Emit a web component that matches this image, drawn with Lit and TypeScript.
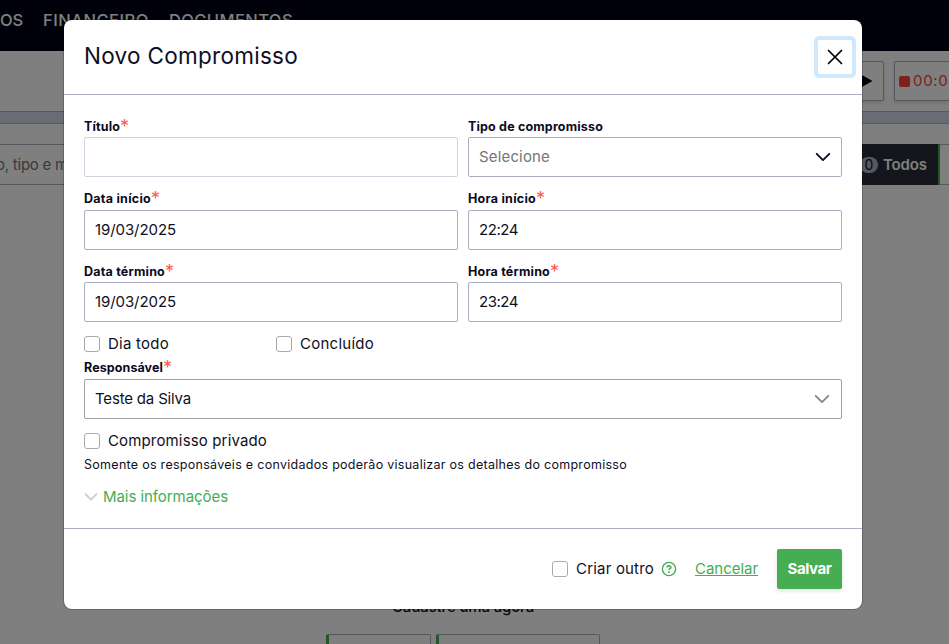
import { LitElement, html, css, svg, nothing } from "lit";
import { customElement, property } from "lit/decorators.js";

/** Text run tracked so that it fills a given advance width. */
@customElement("tracked-text")
class TrackedText extends LitElement {
  @property() text = "";
  @property({ type: Number }) width = 0;
  static styles = css`
    :host { display: inline-block; white-space: pre; flex: none; }
  `;
  render() {
    return html`<span>${this.text}</span>`;
  }
  updated() {
    const span = this.renderRoot.querySelector("span")!;
    span.style.letterSpacing = "0";
    const natural = span.getBoundingClientRect().width;
    span.style.letterSpacing = `${(this.width - natural) / this.text.length}px`;
  }
}

const t = (text: string, width: number) =>
  html`<tracked-text .text=${text} .width=${width}></tracked-text>`;

const chevron = (cls: string) => html`
  <svg class="chevron ${cls}" viewBox="0 0 16 16">
    ${svg`<path d="M1.7 4.8 8 11.1l6.3-6.3" fill="none" stroke="currentColor" stroke-linecap="round" stroke-linejoin="round"/>`}
  </svg>`;

@customElement("app-root")
class AppRoot extends LitElement {
  static styles = css`
    :host {
      display: block; position: relative; width: 949px; height: 644px; overflow: hidden;
      background: #fff; color: #0f0f23; font: 15px/20px Inter, "Open Sans", sans-serif;
    }
    * { box-sizing: border-box; }
    .page { display: flex; flex-direction: column; height: 644px; }
    .nav { height: 51px; flex: none; background: #000014; color: #fff; font-size: 16.5px; font-weight: 500;
      display: flex; align-items: flex-start; gap: 20px; padding-top: 10px; }
    .timer { height: 61px; flex: none; border-bottom: 1px solid #abaec2; display: flex; justify-content: flex-end;
      gap: 10px; padding-top: 10px; box-shadow: 0 2px 4px rgba(0,0,0,.1); }
    .box { height: 40px; border: 1px solid #abaec2; border-radius: 2px; display: flex; align-items: center;
      box-shadow: 0 2px 4px rgba(0,0,0,.12); }
    .play { width: 60px; justify-content: flex-end; padding-right: 10px; }
    .play svg { width: 12px; height: 14px; }
    .clock { width: 55px; border-right: 0; border-radius: 2px 0 0 2px; color: #ff4439; padding-left: 4px; gap: 3px; }
    .stop { width: 11px; height: 11px; border-radius: 2px; background: #ff4439; flex: none; }
    .band { height: 12px; flex: none; background: #d3d8e8; border-bottom: 1px solid #abaec2; }
    .filters { height: 61px; padding-top: 20px; flex: none; display: flex; }
    .search { flex: 1; height: 41px; border: 1px solid #abaec2; border-width: 1px 0; display: flex; align-items: center; color: #757575; }
    .search tracked-text { margin-left: -4px; }
    .all { height: 41px; width: 100px; background: #2b2d38; border-right: 2px solid #46ad53; color: #fff; font-weight: 600;
      display: flex; align-items: center; justify-content: flex-end; gap: 5px; padding-right: 11px; }
    .count { background: #abaec2; color: #0f0f23; border-radius: 8px; height: 16px; width: 18px; font-size: 14px; font-weight: 400;
      display: flex; align-items: center; justify-content: center; }
    .next { width: 9px; height: 41px; border: 1px solid #abaec2; border-width: 1px 0; }
    .empty { flex: 1; display: flex; flex-direction: column; justify-content: flex-end; }
    .hint { padding-left: 392px; height: 37px; font-weight: 450; }
    .choices { display: flex; gap: 5px; padding-left: 326px; }
    .choice { height: 10px; border: 1px solid #abaec2; border-left: 3px solid #46ad53; border-bottom: 0; border-radius: 2px 2px 0 0; }
    .c1 { width: 105px; } .c2 { width: 164px; }
    .backdrop { position: absolute; inset: 0; background: rgba(0,0,0,.5); display: flex; justify-content: center; align-items: flex-start;
      padding: 20px 23px 0 0; }
    .modal { width: 798px; height: 589px; background: #fff; border-radius: 8px; box-shadow: 0 0 0 1px rgba(0,0,0,.2); display: flex; flex-direction: column; }
    header { height: 75px; flex: none; border-bottom: 1px solid #abaec2; padding: 18px 10px 0 20px; display: flex; justify-content: space-between; align-items: flex-start; }
    h1 { margin: 0; font-size: 22.5px; line-height: 36px; font-weight: 400; }
    .close { width: 34px; height: 34px; border: 0; border-radius: 2px; box-shadow: 0 0 0 4px #cfe8fc; background: #fff; padding: 0; color: #000;
      margin: 2px 0 0; display: flex; align-items: center; justify-content: center; }
    .close svg { width: 16px; height: 16px; display: block; }
    .body { height: 433px; flex: none; padding: 23px 20px 0; }
    .row { display: grid; grid-template-columns: 374px 374px; gap: 10px; }
    .label { height: 19px; font-size: 12.5px; line-height: 17px; font-weight: 700; display: flex; color: #0a0a1e; }
    .star { color: #ff5a4f; font-weight: 400; font-size: 18px; line-height: 18px; }
    .input { height: 40px; border: 1px solid #abaec2; border-radius: 2px; display: flex; align-items: center; justify-content: space-between; padding: 0 10px; }
    .field { margin-bottom: 13px; }
    .second .label { height: 20px; }
    .last .field { margin-bottom: 12px; }
    .light { border-color: #cdd2de; } .grey { border-color: #a0a0a0; }
    .placeholder { color: #757575; }
    .chevron { width: 16px; height: 16px; flex: none; stroke-width: 1.9; }
    .dim { color: #858585; stroke-width: 1.8; margin-right: 1px; }
    .pale { width: 14px; height: 14px; color: #ccc; stroke-width: 2.1; }
    .checks { display: grid; grid-template-columns: 192px 1fr; height: 25px; }
    .owner .label { height: 20px; }
    .check { display: flex; align-items: center; gap: 8px; height: 20px; }
    .check i { width: 16px; height: 16px; border: 1px solid #aaa; border-radius: 3px; background: #fff; }
    .privacy { margin-top: 12px; }
    .note { font-size: 12.5px; line-height: 18px; margin-top: 5px; height: 31px; }
    .more { display: flex; align-items: center; gap: 5px; color: #46ad53; height: 20px; }
    footer { height: 81px; border-top: 1px solid #abaec2; display: flex; justify-content: flex-end; align-items: center; padding-right: 20px; }
    .help { width: 16px; height: 16px; margin: 0 18px 0 7px; color: #46ad53; }
    .cancel { color: #46ad53; height: 18px; line-height: 20px; border-bottom: 1px solid #46ad53; margin: 0 19px 0 0; position: relative; top: -2px; display: flex; }
    .cancel tracked-text { position: relative; top: 1px; }
    .save { width: 65px; height: 40px; border: 0; border-radius: 2px; background: #46ad53; color: #fff; font: inherit; font-weight: 700; padding: 0;
      box-shadow: 0 2px 4px rgba(0,0,0,.12); }
  `;

  private label(text: string, width: number, required = true) {
    return html`<div class="label">${t(text, width)}${required ? html`<span class="star">*</span>` : nothing}</div>`;
  }

  private field(label: string, lw: number, value: string, vw: number) {
    return html`<div class="field">${this.label(label, lw)}
      <div class="input ${value ? "" : "light"}">${value ? t(value, vw) : nothing}</div></div>`;
  }

  render() {
    return html`
      <div class="page">
        <div class="nav">${t("OS", 23)}${t("FINANCEIRO", 106)}${t("DOCUMENTOS", 124)}</div>
        <div class="timer">
          <div class="box play"><svg viewBox="0 0 12 14"><path d="M0 0.5v13L11.5 7z" fill="#000014"/></svg></div>
          <div class="box clock"><span class="stop"></span>${t("00:0", 35.5)}</div>
        </div>
        <div class="band"></div>
        <div class="filters">
          <div class="search">${t("o, tipo e m", 72)}</div>
          <div class="all"><span class="count">0</span>${t("Todos", 44)}</div>
          <div class="next"></div>
        </div>
        <div class="empty">
          <div class="hint">${t("Cadastre uma agora", 142)}</div>
          <div class="choices"><div class="choice c1"></div><div class="choice c2"></div></div>
        </div>
      </div>
      <div class="backdrop">
        <div class="modal">
          <header>
            <h1>${t("Novo Compromisso", 214)}</h1>
            <button class="close"><svg viewBox="0 0 16 16"><path d="M1.5 1.5l13 13M14.5 1.5l-13 13" stroke="currentColor" stroke-width="1.7" stroke-linecap="round"/></svg></button>
          </header>
          <div class="body">
            <div class="row">
              ${this.field("Título", 36, "", 0)}
              <div class="field">${this.label("Tipo de compromisso", 135, false)}
                <div class="input"><span class="placeholder">${t("Selecione", 71)}</span>${chevron("")}</div></div>
            </div>
            <div class="row second">
              ${this.field("Data início", 67, "19/03/2025", 81)}
              ${this.field("Hora início", 68, "22:24", 39)}
            </div>
            <div class="row last">
              ${this.field("Data término", 81, "19/03/2025", 81)}
              ${this.field("Hora término", 82, "23:24", 39)}
            </div>
            <div class="checks">
              <label class="check"><i></i>${t("Dia todo", 61)}</label>
              <label class="check"><i></i>${t("Concluído", 74)}</label>
            </div>
            <div class="owner">
              ${this.label("Responsável", 79)}
              <div class="input grey">${t("Teste da Silva", 96)}${chevron("dim")}</div>
            </div>
            <label class="check privacy"><i></i>${t("Compromisso privado", 159)}</label>
            <div class="note">${t("Somente os responsáveis e convidados poderão visualizar os detalhes do compromisso", 543)}</div>
            <div class="more">${chevron("pale")}${t("Mais informações", 125)}</div>
          </div>
          <footer>
            <label class="check"><i></i>${t("Criar outro", 78)}</label>
            <svg class="help" viewBox="0 0 16 16"><circle cx="8" cy="8" r="6.6" fill="none" stroke="currentColor" stroke-width="1.4"/><path d="M6.1 6.5C6.1 4.3 9.9 4.3 9.9 6.5 9.9 7.7 8 7.7 8 9" fill="none" stroke="currentColor" stroke-width="1.6"/><circle cx="8" cy="11" r="1" fill="currentColor"/></svg>
            <span class="cancel">${t("Cancelar", 63)}</span>
            <button class="save">${t("Salvar", 44)}</button>
          </footer>
        </div>
      </div>`;
  }
}
